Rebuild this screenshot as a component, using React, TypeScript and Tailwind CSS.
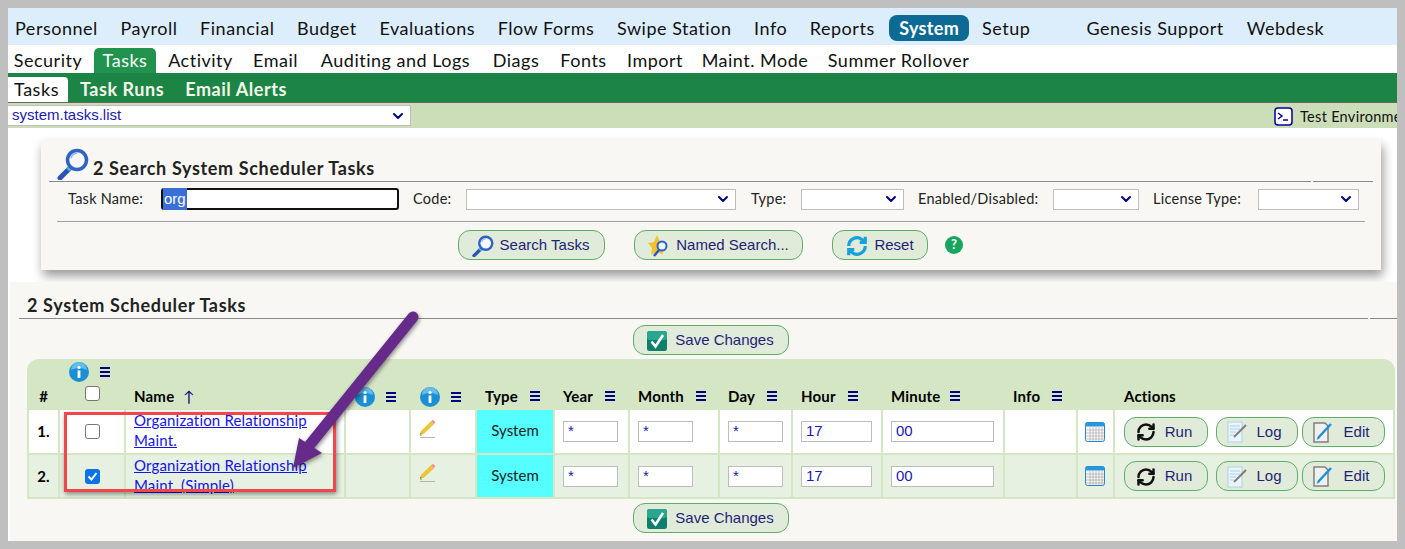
import type { ReactNode } from "react";
import { ChevronDown, RefreshCw } from "lucide-react";

const topNav = ["Personnel", "Payroll", "Financial", "Budget", "Evaluations", "Flow Forms", "Swipe Station", "Info", "Reports", "System", "Setup"];
const subNav = [
  { label: "Security", width: "w-[80px]" },
  { label: "Tasks", width: "ml-[6px] mr-[2px] w-[62px] bg-[#22924f] text-white" },
  { label: "Activity", width: "w-[85px]" },
  { label: "Email", width: "w-[65px]" },
  { label: "Auditing and Logs", width: "w-[175px]" },
  { label: "Diags", width: "w-[66px]" },
  { label: "Fonts", width: "w-[69px]" },
  { label: "Import", width: "w-[74px]" },
  { label: "Maint. Mode", width: "w-[126px]" },
  { label: "Summer Rollover", width: "w-[161px]" },
];
const gridCols = "grid grid-cols-[29px_64px_218px_63px_64px_76px_73px_88px_71px_88px_120px_71px_35px_278px] gap-[2px]";
const arial = "[font-family:'Liberation_Sans',Arial,sans-serif]";

function Magnifier({ size = 32 }: { size?: number }) {
  return (
    <svg width={size} height={size} viewBox="0 0 32 32" className="shrink-0">
      <path d="M3 30 L12 21" stroke="#2a55b5" strokeWidth="5" strokeLinecap="round" />
      <path d="M11 22 L14 19" stroke="#4fb6c9" strokeWidth="5" />
      <circle cx="20" cy="12" r="9.5" fill="#f4f8fc" stroke="#2f62c4" strokeWidth="3.5" />
      <path d="M14 10 A7 7 0 0 1 20 5" fill="none" stroke="#8db4ea" strokeWidth="1.5" />
    </svg>
  );
}

function InfoDot() {
  return (
    <svg width="20" height="20" viewBox="0 0 20 20" className="shrink-0">
      <circle cx="10" cy="10" r="10" fill="#1b8fd6" />
      <path d="M2 8 A8 8 0 0 1 18 8 Q10 4 2 8Z" fill="#63bcea" />
      <circle cx="10" cy="5.5" r="1.6" fill="#fff" />
      <rect x="8.6" y="8.4" width="2.8" height="7.6" fill="#fff" />
    </svg>
  );
}

function Bars() {
  return (
    <svg width="10" height="10" viewBox="0 0 10 10" className="shrink-0">
      <path d="M0 1h10M0 5h10M0 9h10" stroke="#000080" strokeWidth="2" />
    </svg>
  );
}

function Pencil() {
  return (
    <svg width="17" height="21" viewBox="0 0 17 21" className="shrink-0">
      <path d="M1 15.5 L2.6 11.8 L12.5 2.2 L15 4.8 L5 14.2Z" fill="#f0c62e" stroke="#d6a81e" strokeWidth="0.5" />
      <path d="M12.5 2.2 L14 0.8 L16.4 3.4 L15 4.8Z" fill="#f580b4" />
      <path d="M1 15.5 L1.7 13.9 L2.9 15Z" fill="#6a5a36" />
      <path d="M1 16.5 H3 M1 18.5 H16" stroke="#b4b4b4" strokeWidth="1" />
    </svg>
  );
}

function Calendar() {
  return (
    <svg width="20" height="20" viewBox="0 0 20 20" className="shrink-0">
      <rect x="0.5" y="0.5" width="19" height="19" rx="2" fill="#fff" fillOpacity="0.6" stroke="#2a86c8" />
      <rect x="0.5" y="0.5" width="19" height="4" rx="1.5" fill="#2598e0" />
      <path d="M1 8h18M1 11h18M1 14h18M1 17h18M5 5v14M8 5v14M11 5v14M14 5v14M17 5v14" stroke="#a8a8a8" strokeWidth="0.7" />
    </svg>
  );
}

function SaveCheck() {
  return (
    <svg width="20" height="20" viewBox="0 0 20 20" className="shrink-0">
      <rect width="20" height="20" rx="2.5" fill="#0f7f6c" />
      <rect width="20" height="9" rx="2.5" fill="#2aa58f" />
      <path d="M4.5 10.5 L8.5 15.5 L16 4" fill="none" stroke="#fff" strokeWidth="2.6" />
    </svg>
  );
}

function LogIcon() {
  return (
    <svg width="22" height="22" viewBox="0 0 22 22" className="shrink-0">
      <rect x="1" y="1" width="14" height="20" fill="#eaf5fb" stroke="#a8d3e8" />
      <path d="M3 5h10M3 8h10M3 11h6M3 14h4" stroke="#9cc8e0" strokeWidth="0.8" />
      <path d="M7 16 L19 4" stroke="#7c7c7c" strokeWidth="2" />
    </svg>
  );
}

function EditIcon() {
  return (
    <svg width="20" height="21" viewBox="0 0 20 21" className="shrink-0">
      <path d="M1 1 H12 L15 4 V20 H1Z" fill="#f0f0f0" stroke="#808080" strokeWidth="1.5" />
      <path d="M5 16 L18 2" stroke="#1c8fdc" strokeWidth="2.4" />
      <path d="M3.5 18 L5 15 L6.5 16.5Z" fill="#1c8fdc" />
    </svg>
  );
}

function RunIcon() {
  return <RefreshCw size={20} strokeWidth={3} color="#111" className="shrink-0" />;
}

function Btn({ icon, label, className, gap = "gap-2" }: { icon: ReactNode; label: string; className: string; gap?: string }) {
  return (
    <button className={`flex h-[30px] items-center justify-center rounded-[12px] border border-[#5cae68] bg-[#e1ebd9] pt-[1px] text-[15px] text-[#1f1f78] ${arial} ${gap} ${className}`}>
      {icon}
      <span>{label}</span>
    </button>
  );
}

function SelectBox({ className }: { className: string }) {
  return (
    <div className={`flex h-[21px] items-center justify-end border border-[#bdbdbd] bg-white pr-1 ${className}`}>
      <ChevronDown size={16} strokeWidth={3} color="#000080" />
    </div>
  );
}

function Label({ children, className }: { children: ReactNode; className: string }) {
  return <span className={`text-[14.5px] tracking-[0.25px] text-[#222] ${className}`}>{children}</span>;
}

function HeadCell({ children }: { children?: ReactNode }) {
  return <div className="flex items-center gap-[12px] self-end pb-[1px] pl-2 text-[15px] font-bold tracking-[0.2px] text-black">{children}</div>;
}

function InfoHead() {
  return (
    <HeadCell>
      <span className="ml-[1px]">
        <InfoDot />
      </span>
      <span className="-ml-[1px]">
        <Bars />
      </span>
    </HeadCell>
  );
}

function FieldCell({ value, bg, width }: { value: string; bg: string; width: string }) {
  return (
    <div className={`flex items-center pl-2 ${bg}`}>
      <div className={`flex h-[21px] items-center border border-[#bdbdbd] bg-white pl-1 text-[15px] text-[#1a1ab0] ${arial} ${width}`}>{value}</div>
    </div>
  );
}

function TaskRow({ n, lines, checked, bg, h }: { n: number; lines: string[]; checked: boolean; bg: string; h: string }) {
  return (
    <>
      <div className={`flex items-center justify-center text-[15px] font-bold text-black ${bg} ${h}`}>{n}.</div>
      <div className={`flex items-center justify-center ${bg}`}>
        {checked ? (
          <div className="flex h-[15px] w-[15px] items-center justify-center rounded-[3px] bg-[#0b72e7]">
            <svg width="11" height="11" viewBox="0 0 11 11">
              <path d="M1.5 5.5 L4.5 8.5 L9.5 2" fill="none" stroke="#fff" strokeWidth="2" />
            </svg>
          </div>
        ) : (
          <div className="h-[15px] w-[15px] rounded-[3px] border border-[#767676] bg-white" />
        )}
      </div>
      <div className={`overflow-hidden pl-2 text-[15px] leading-[20px] tracking-[0.17px] text-[#1414e6] underline ${bg}`}>
        {lines.map((line) => (
          <div key={line}>{line}</div>
        ))}
      </div>
      <div className={bg} />
      <div className={`flex items-center pb-[5px] pl-2 ${bg}`}>
        <Pencil />
      </div>
      <div className="flex items-center justify-center bg-[#55ffff] pb-[2px] text-[15px] text-[#222]">System</div>
      <FieldCell value="*" bg={bg} width="w-[55px]" />
      <FieldCell value="*" bg={bg} width="w-[55px]" />
      <FieldCell value="*" bg={bg} width="w-[55px]" />
      <FieldCell value="17" bg={bg} width="w-[71px]" />
      <FieldCell value="00" bg={bg} width="w-[103px]" />
      <div className={bg} />
      <div className={`flex items-center justify-center pr-[2px] ${bg}`}>
        <Calendar />
      </div>
      <div className={`flex items-center gap-2 pl-[9px] ${bg}`}>
        <Btn icon={<RunIcon />} label="Run" className="w-[84px] pr-[4px]" gap="gap-[9px]" />
        <Btn icon={<LogIcon />} label="Log" className="w-[82px] pr-[5px]" gap="gap-[7px]" />
        <Btn icon={<EditIcon />} label="Edit" className="-ml-1 w-[83px] pr-[5px]" gap="gap-[11px]" />
      </div>
    </>
  );
}

export default function App() {
  return (
    <div className="h-[549px] w-[1405px] overflow-hidden bg-[#bfbfbf] p-2 [font-family:Lato,sans-serif]">
      <div className="relative flex h-[533px] w-[1389px] flex-col overflow-hidden bg-white">
        <nav className="flex h-[37px] shrink-0 items-start bg-[#dceefc] pl-[2px] pt-[7px] text-[18px] tracking-[0.52px] text-[#111]">
          {topNav.map((item) => (
            <span
              key={item}
              className={`flex h-[26px] items-center rounded-[8px] ${
                item === "System" ? "-ml-[3px] mr-[8px] bg-[#0c6a94] px-[10px] font-bold tracking-[0.3px] text-white" : item === "Setup" ? "mr-[51px] px-[5px]" : "mr-[12.6px] px-[5px]"
              }`}
            >
              {item}
            </span>
          ))}
          <span className="mr-[23px] flex h-[26px] items-center">Genesis Support</span>
          <span className="flex h-[26px] items-center">Webdesk</span>
        </nav>

        <nav className="flex h-[28px] shrink-0 items-end text-[18px] tracking-[0.5px] text-[#111]">
          {subNav.map((item) => (
            <span key={item.label} className={`flex h-[25px] items-center justify-center rounded-t-[5px] ${item.width}`}>
              {item.label}
            </span>
          ))}
        </nav>

        <div className="flex h-[30px] shrink-0 items-end border-b border-[#666] bg-[#1c8445] text-[18px] font-bold tracking-[0.55px] text-[#f3f7ea]">
          <span className="flex h-[25px] w-[60px] items-center rounded-tr-[4px] bg-white pl-[6px] font-normal text-[#111]">Tasks</span>
          <span className="ml-3 flex h-[25px] items-center">Task Runs</span>
          <span className="ml-[21px] flex h-[25px] items-center">Email Alerts</span>
        </div>

        <div className="flex h-[25px] shrink-0 items-start whitespace-nowrap bg-[#ccdeb8] pt-[2px]">
          <div className={`flex h-[21px] w-[403px] shrink-0 items-center justify-between border-y border-r border-[#bdbdbd] bg-white pl-1 pr-1 text-[15px] text-[#1a1ab0] ${arial}`}>
            <span>system.tasks.list</span>
            <ChevronDown size={16} strokeWidth={3} color="#000080" />
          </div>
          <div className="ml-[863px] flex shrink-0 items-center gap-[7px] text-[14.5px] tracking-[0.3px] text-[#111]">
            <svg width="19" height="19" viewBox="0 0 19 19" className="shrink-0">
              <rect x="1" y="1" width="17" height="17" rx="3" fill="#fff" stroke="#00009a" strokeWidth="1.5" />
              <path d="M4 6 L8 9 L4 12" fill="none" stroke="#00009a" strokeWidth="1.5" />
              <path d="M9 13 H14" stroke="#00009a" strokeWidth="1.5" />
            </svg>
            <span className="pt-[1px]">Test Environment</span>
          </div>
        </div>

        <section className="ml-[33px] mt-3 flex h-[130px] w-[1340px] shrink-0 flex-col bg-[#f8f7f3] shadow-[2px_6px_10px_rgba(0,0,0,0.4)]">
          <div className="relative ml-2 flex h-[42px] w-[1324px] shrink-0 items-end border-b border-[#8a8a8a]">
            <div className="mb-[1px] ml-2">
              <Magnifier />
            </div>
            <h2 className="mb-[1px] ml-[4px] text-[18px] font-bold leading-6 tracking-[0.65px] text-[#222]">2 Search System Scheduler Tasks</h2>
            <span className="absolute -bottom-[1px] right-[60px] h-[1px] w-[2px] bg-[#f8f7f3]" />
          </div>
          <div className="flex h-[39px] shrink-0 items-center pb-[5px] pl-[27px]">
            <Label className="w-[93px]">Task Name:</Label>
            <div className={`flex h-[22px] w-[238px] items-center rounded-[3px] border-2 border-[#111] bg-white text-[15px] ${arial}`}>
              <span className="bg-[#3a6fd8] px-[1px] text-white">org</span>
            </div>
            <Label className="ml-[14px] w-[53px]">Code:</Label>
            <SelectBox className="w-[270px]" />
            <Label className="ml-[15px] w-[50px]">Type:</Label>
            <SelectBox className="w-[103px]" />
            <Label className="ml-[14px] w-[135px]">Enabled/Disabled:</Label>
            <SelectBox className="w-[86px]" />
            <Label className="ml-[14px] w-[105px]">License Type:</Label>
            <SelectBox className="w-[101px]" />
          </div>
          <div className="ml-4 flex w-[1308px] items-center border-t border-[#a0a0a0] pl-[401px] pt-2">
            <Btn icon={<Magnifier size={22} />} label="Search Tasks" className="w-[147px] pr-[2px]" gap="gap-[6px]" />
            <Btn
              icon={
                <svg width="24" height="24" viewBox="0 0 24 24" className="shrink-0">
                  <path d="M9 1 L12 8 L19 9 L14 14 L15 21 L9 17 L3 21 L4 14 L0 9 L6 8Z" fill="#f2c22a" />
                  <circle cx="14" cy="12" r="4.5" fill="#eef3f8" stroke="#2f62c4" strokeWidth="2" />
                  <path d="M6 22 L11 16" stroke="#2a55b5" strokeWidth="2.5" />
                </svg>
              }
              label="Named Search..."
              className="ml-[29px] w-[169px]"
              gap="gap-[4px]"
            />
            <Btn
              icon={
                <svg width="22" height="22" viewBox="0 0 24 24" fill="none" stroke="#18a0dc" strokeWidth="3.5" className="shrink-0">
                  <path d="M3 12a9 9 0 0 1 15-6.7L21 8" />
                  <path d="M21 2v6h-6" />
                  <path d="M21 12a9 9 0 0 1-15 6.7L3 16" />
                  <path d="M3 22v-6h6" />
                </svg>
              }
              label="Reset"
              className="ml-[29px] w-[96px]"
              gap="gap-[6px]"
            />
            <div className="ml-[17px] flex h-[18px] w-[18px] items-center justify-center rounded-full bg-[#18a45e] text-[13px] font-bold text-white">?</div>
          </div>
        </section>

        <section className="ml-[2px] mt-3 flex min-h-0 flex-1 flex-col bg-[#f8f7f3]">
          <h2 className="relative ml-[9px] flex h-[37px] w-[1378px] shrink-0 items-end border-b border-[#8a8a8a] pb-[1px] pl-2 text-[18px] font-bold leading-6 tracking-[0.65px] text-[#222]">
            2 System Scheduler Tasks
            <span className="absolute -bottom-[1px] right-[27px] h-[1px] w-[2px] bg-[#f8f7f3]" />
          </h2>
          <div className="flex justify-center pl-[14px] pt-[6px]">
            <Btn icon={<SaveCheck />} label="Save Changes" className="w-[156px]" gap="gap-[8px]" />
          </div>
          <div className="ml-[17px] mt-1 w-[1368px] rounded-t-[12px] bg-[#d5e6c5] pb-[2px] pl-[2px]">
            <div className={gridCols}>
              <div className="flex h-[49px] items-end justify-center pb-[1px] text-[15px] font-bold text-black">#</div>
              <div className="flex flex-col items-start pl-[9px] pt-[3px]">
                <div className="flex items-center gap-[11px]">
                  <InfoDot />
                  <Bars />
                </div>
                <div className="ml-4 mt-[4px] h-[15px] w-[15px] rounded-[3px] border border-[#767676] bg-white" />
              </div>
              <HeadCell>
                <span>Name</span>
                <span className="-ml-[3px] font-normal text-[#000080]">↑</span>
              </HeadCell>
              <InfoHead />
              <InfoHead />
              <HeadCell>
                <span>Type</span>
                <Bars />
              </HeadCell>
              <HeadCell>
                <span>Year</span>
                <Bars />
              </HeadCell>
              <HeadCell>
                <span>Month</span>
                <Bars />
              </HeadCell>
              <HeadCell>
                <span>Day</span>
                <Bars />
              </HeadCell>
              <HeadCell>
                <span>Hour</span>
                <Bars />
              </HeadCell>
              <HeadCell>
                <span className="-mr-[3px]">Minute</span>
                <Bars />
              </HeadCell>
              <HeadCell>
                <span>Info</span>
                <Bars />
              </HeadCell>
              <HeadCell />
              <HeadCell>
                <span className="pl-[1px]">Actions</span>
              </HeadCell>
              <TaskRow n={1} lines={["Organization Relationship", "Maint."]} checked={false} bg="bg-white" h="h-[43px]" />
              <TaskRow n={2} lines={["Organization Relationship", "Maint. (Simple)"]} checked bg="bg-[#e7f1e1]" h="h-[42px]" />
            </div>
          </div>
          <div className="flex justify-center pl-[14px] pt-[4px]">
            <Btn icon={<SaveCheck />} label="Save Changes" className="w-[156px]" gap="gap-[8px]" />
          </div>
        </section>

        <div className="absolute left-[56px] top-[404px] h-[80px] w-[272px] border-[3px] border-[#f0474d] shadow-[1px_2px_5px_rgba(0,0,0,0.45)]" />
        <svg width="160" height="190" viewBox="0 0 160 190" className="absolute left-[270px] top-[298px]">
          <g style={{ filter: "drop-shadow(1px 2px 2px rgba(0,0,0,0.45))" }}>
            <path d="M135 11 L30 141" stroke="#652a8a" strokeWidth="11" strokeLinecap="round" />
            <path d="M21 132 L44 147 L15 162Z" fill="#652a8a" />
          </g>
        </svg>
      </div>
    </div>
  );
}
